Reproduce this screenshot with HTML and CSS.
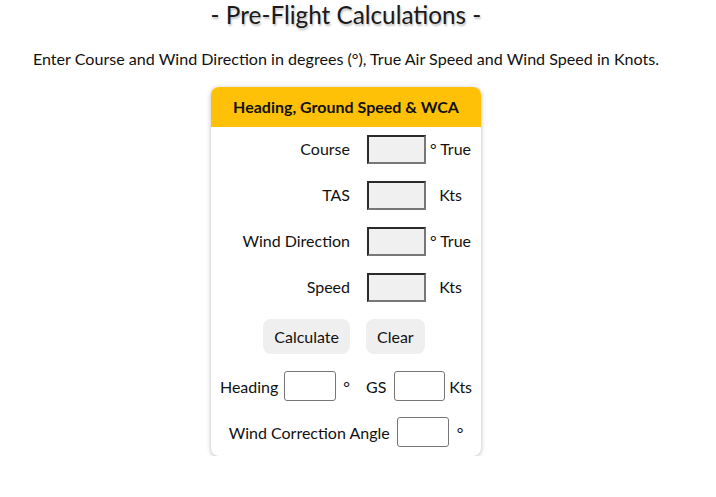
FILE: index.html
```html
<!DOCTYPE html>
<html>
<head>
<meta charset="utf-8">
<link rel="stylesheet" href="styles.css">
</head>
<body>
<div class="page">
<h1 class="title">- Pre-Flight Calculations -</h1>
<p class="intro">Enter Course and Wind Direction in degrees (°), True Air Speed and Wind Speed in Knots.</p>
<div class="card">
  <div class="card-head">Heading, Ground Speed &amp; WCA</div>
  <div class="card-body">
    <div class="form">
      <label class="lbl">Course</label><input class="in" type="text"><span class="unit">° True</span>
      <label class="lbl">TAS</label><input class="in" type="text"><span class="unit">Kts</span>
      <label class="lbl">Wind Direction</label><input class="in" type="text"><span class="unit">° True</span>
      <label class="lbl">Speed</label><input class="in" type="text"><span class="unit">Kts</span>
      <button class="btn btn-calc">Calculate</button><button class="btn btn-clear">Clear</button><span></span>
    </div>
    <div class="result">
      <span>Heading</span><input class="out out-hdg" type="text"><span class="deg">°</span><span class="gs">GS</span><input class="out out-gs" type="text"><span>Kts</span>
    </div>
    <div class="result result-wca">
      <span>Wind Correction Angle</span><input class="out out-wca" type="text"><span class="deg2">°</span>
    </div>
  </div>
</div>
</div>
</body>
</html>
```

FILE: styles.css
```css
html, body {
  margin: 0;
  padding: 0;
  background: #fff;
}
body {
  font-family: Lato, "Open Sans", sans-serif;
  color: #111;
  font-size: 16px;
}
.page {
  width: 692px;
}
.title {
  margin: 0;
  font-size: 24.3px;
  font-weight: 400;
  text-align: center;
  color: #1a1a1a;
  line-height: 29.3px;
  text-shadow: 1px 2px 2px rgba(0,0,0,0.25);
}
.intro {
  margin: 20px 0 0 0;
  text-align: center;
  line-height: 19px;
  font-size: 16.1px;
}
.card {
  width: 270px;
  margin: 19px auto 0 auto;
  border-radius: 8px;
  background: #fff;
  box-shadow: 0 1px 5px rgba(0,0,0,0.28);
  overflow: hidden;
}
.card-head {
  background: #ffc107;
  height: 40px;
  line-height: 40px;
  text-align: center;
  font-weight: 700;
  font-size: 16px;
}
.card-body {
  padding: 8px 8px 9px 8px;
}
.form {
  display: grid;
  grid-template-columns: 131px 76px 47px;
  row-gap: 17px;
  align-items: center;
}
.lbl {
  text-align: right;
  position: relative;
  top: -1px;
}
.in {
  width: 59px;
  height: 29px;
  box-sizing: border-box;
  margin: 0 0 0 17px;
  padding: 0;
  background: #f0f0f0;
  border: 2px solid;
  border-color: #2a2a2a #777 #777 #2a2a2a;
  font: inherit;
}
.unit {
  text-align: center;
  padding-left: 2px;
  position: relative;
  top: -1px;
}
.btn {
  font: inherit;
  font-size: 16px;
  color: #111;
  background: #efefef;
  border: none;
  border-radius: 8px;
  height: 35px;
  padding: 0 11px;
}
.btn-calc {
  justify-self: end;
}
.btn-clear {
  justify-self: start;
  margin-left: 16px;
}
.result {
  display: flex;
  align-items: center;
  justify-content: center;
  margin-top: 17px;
}
.out {
  width: 52px;
  height: 30px;
  box-sizing: border-box;
  border: 1px solid #767676;
  border-radius: 3px;
  background: #fff;
  padding: 0;
  font: inherit;
}
.out-hdg { margin: 0 7px 0 6px; }
.deg { margin-right: 16px; }
.out-gs { margin: 0 4px 0 8px; width: 51px; }
.out-wca { margin: 0 0 0 7px; }
.deg2 { margin-left: 8px; }
.result-wca { margin-top: 16px; }
```
